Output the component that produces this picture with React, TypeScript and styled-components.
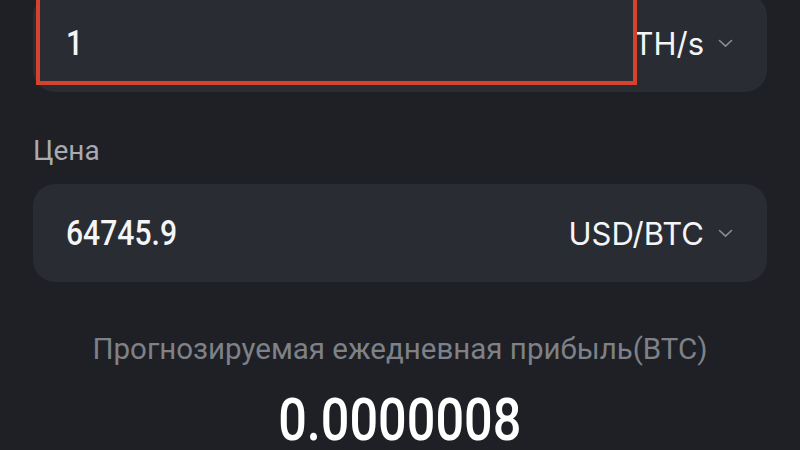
import React from "react";
import styled, { createGlobalStyle } from "styled-components";

const GlobalStyle = createGlobalStyle`
  html, body {
    margin: 0;
    padding: 0;
    background: #1e2025;
    overflow: hidden;
  }
  body {
    font-family: Inter, "Noto Sans", sans-serif;
  }
`;

const Page = styled.div`
  width: 800px;
  height: 450px;
  box-sizing: border-box;
  padding: 0 33px;
  background: #1e2025;
  display: flex;
  flex-direction: column;
`;

const Field = styled.div<{ $shift?: number }>`
  position: relative;
  height: 98px;
  margin-top: ${(p) => p.$shift ?? 0}px;
  box-sizing: border-box;
  padding: 0 34px 0 33px;
  display: flex;
  align-items: center;
  justify-content: space-between;
  background: #2a2c34;
  border-radius: 22px;
`;

const Highlight = styled.div`
  position: absolute;
  left: 3px;
  top: -20px;
  width: 601px;
  bottom: 7px;
  box-sizing: border-box;
  border: 4px solid #d5432f;
  pointer-events: none;
`;

// DIN-like condensed digits: Roboto narrowed horizontally
const Value = styled.span`
  display: inline-block;
  font-family: Roboto, "Liberation Sans", sans-serif;
  font-weight: 500;
  font-size: 35px;
  color: #f4f5f7;
  transform: scaleX(0.86);
  transform-origin: left center;
`;

const Unit = styled.div`
  display: flex;
  align-items: center;
  gap: 14px;
  font-family: Inter, "Noto Sans", sans-serif;
  font-size: 31px;
  color: #f4f5f7;
`;

const Label = styled.div`
  margin: 44px 0 18px;
  font-family: Roboto, "Noto Sans", sans-serif;
  font-size: 28px;
  line-height: 30px;
  color: #a9abb1;
`;

const Result = styled.div`
  display: flex;
  flex-direction: column;
  align-items: center;
  margin-top: 50px;
`;

const ResultLabel = styled.div`
  font-family: Roboto, "Noto Sans", sans-serif;
  font-size: 29.5px;
  line-height: 34px;
  color: #7f8188;
`;

const ResultValue = styled.div`
  margin-top: 32px;
  font-family: Roboto, "Liberation Sans", sans-serif;
  font-weight: 500;
  font-size: 60px;
  line-height: 44px;
  color: #ffffff;
  transform: scaleX(0.84);
`;

function Chevron() {
  return (
    <svg width="15" height="9" viewBox="0 0 15 9" fill="none">
      <path d="M1.5 1.5 L7.5 7.2 L13.5 1.5" stroke="#8a8c93" strokeWidth="1.6" strokeLinecap="round" strokeLinejoin="round" />
    </svg>
  );
}

export default function App() {
  return (
    <Page>
      <GlobalStyle />
      <Field $shift={-6}>
        <Value>1</Value>
        <Unit>
          TH/s
          <Chevron />
        </Unit>
        <Highlight />
      </Field>
      <Label>Цена</Label>
      <Field>
        <Value>64745.9</Value>
        <Unit>
          USD/BTC
          <Chevron />
        </Unit>
      </Field>
      <Result>
        <ResultLabel>Прогнозируемая ежедневная прибыль(BTC)</ResultLabel>
        <ResultValue>0.0000008</ResultValue>
      </Result>
    </Page>
  );
}
